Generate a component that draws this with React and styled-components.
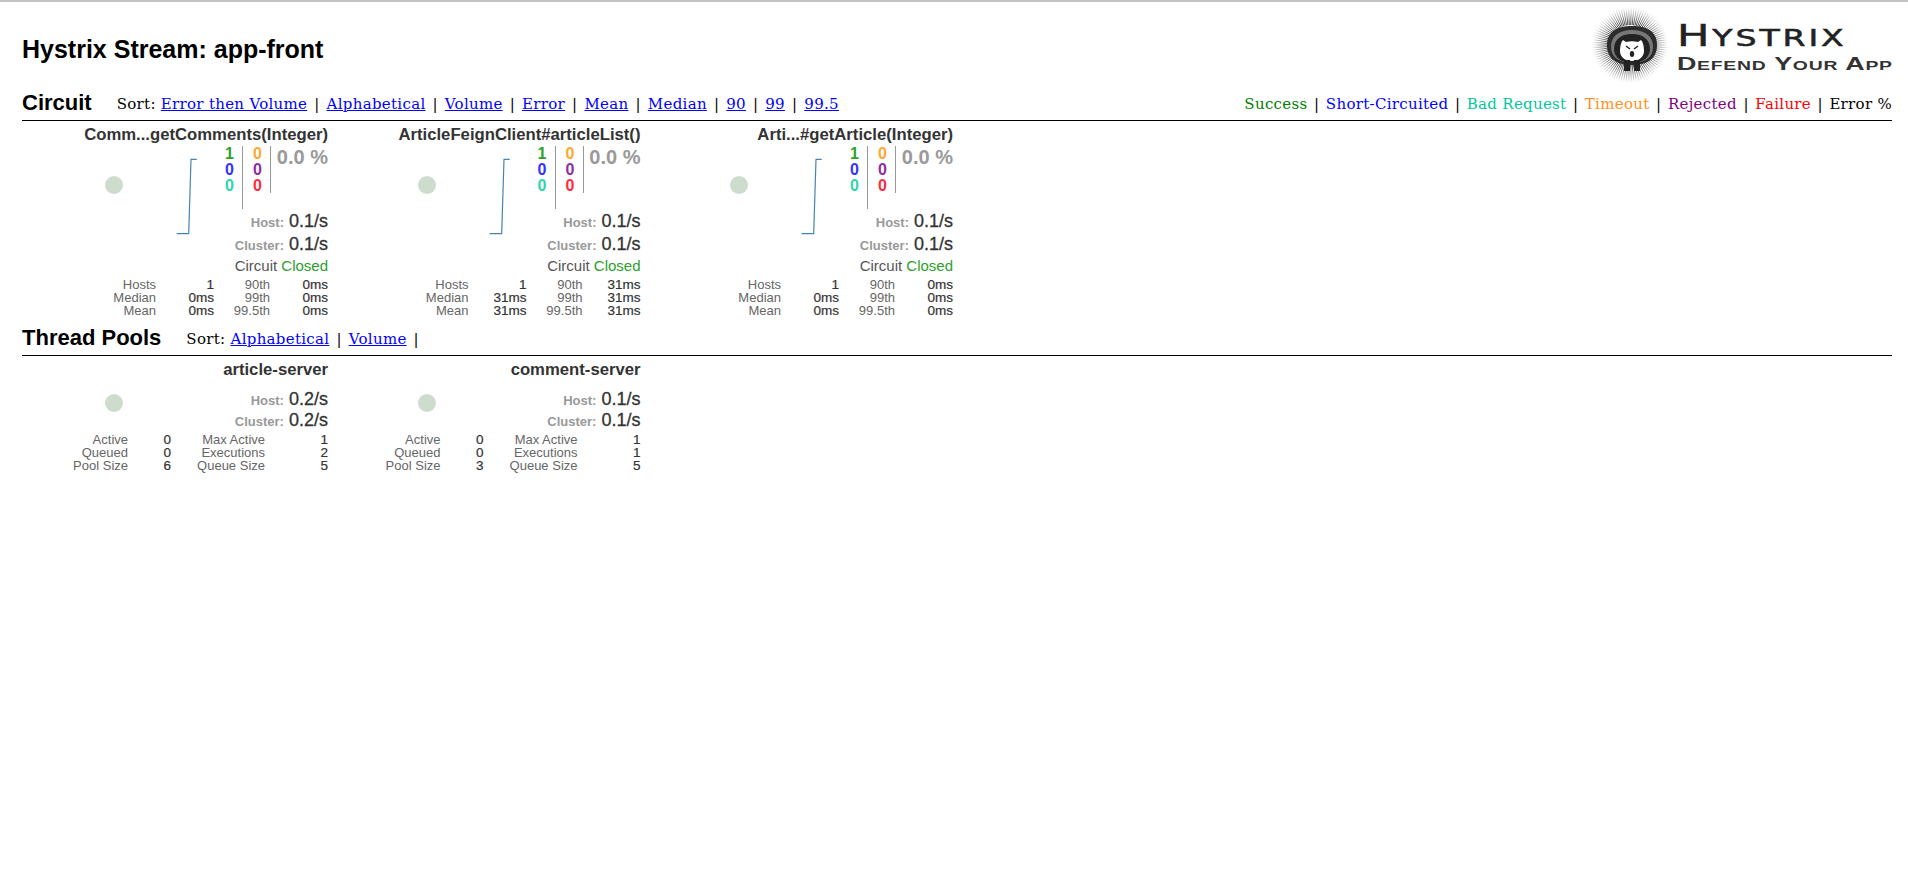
import React from 'react';
import styled, { createGlobalStyle } from 'styled-components';

const GlobalStyle = createGlobalStyle`
  html, body {
    margin: 0;
    padding: 0;
    background: #fff;
    font-family: "Liberation Sans", Arial, sans-serif;
  }
`;

const Page = styled.div`
  border-top: 2px solid #c4c4c4;
  padding: 0 16px 0 22px;
`;

const Header = styled.header`
  display: flex;
  justify-content: space-between;
  align-items: flex-start;
  height: 88px;
`;

const Title = styled.h2`
  margin: 33px 0 0;
  font-size: 25px;
  line-height: 28px;
  font-weight: bold;
  color: #000;
`;

const Logo = styled.div`
  display: flex;
  align-items: flex-start;
  gap: 8px;
  margin: 5px 4px 0 0;
`;

const LogoText = styled.div`
  width: 211px;
  margin-top: 13px;
  display: flex;
  flex-direction: column;
  color: #222;
  white-space: nowrap;
`;

const LogoName = styled.div`
  font-family: "DejaVu Sans", sans-serif;
  font-size: 30px;
  line-height: 32px;
  letter-spacing: 2px;
  -webkit-text-stroke: 0.5px #222;
  transform: scaleX(1.44);
  transform-origin: left center;
`;

const LogoNameRest = styled.span`
  font-size: 23px;
`;

const LogoTag = styled.div`
  font-family: "Liberation Sans", sans-serif;
  font-size: 18px;
  line-height: 21px;
  font-weight: bold;
  font-variant: small-caps;
  letter-spacing: 0.5px;
  color: #333;
  transform: scaleX(1.49);
  transform-origin: left center;
`;

const SectionBar = styled.div`
  display: flex;
  justify-content: space-between;
  align-items: center;
  box-sizing: border-box;
  height: 31px;
  padding-bottom: 5px;
  border-bottom: 1px solid #000;
`;

const SectionLeft = styled.div`
  display: flex;
  align-items: center;
`;

const SectionName = styled.h3`
  margin: 0 ${({ $gap }) => $gap}px 0 0;
  font-size: 22px;
  line-height: 26px;
  font-weight: bold;
  color: #000;
`;

const Menu = styled.div`
  padding-top: 3px;
  font-family: "DejaVu Serif", serif;
  font-size: 15px;
  letter-spacing: 0.3px;
  color: #000;
  white-space: nowrap;
`;

const MenuLink = styled.a`
  color: #0000ff;
  text-decoration: underline;
`;

const Separator = styled.span`
  padding: 0 ${({ $pad }) => $pad}px;
`;

const Legend = styled.span`
  color: ${({ $color }) => $color};
`;

const Cards = styled.div`
  display: flex;
  padding: 4px 0 8px;
`;

const Card = styled.div`
  width: 306px;
  margin-right: 6.5px;
`;

const CardTitle = styled.div`
  text-align: right;
  font-size: 16.7px;
  line-height: 20px;
  font-weight: bold;
  color: #333;
  white-space: nowrap;
`;

const CardBody = styled.div`
  display: flex;
  height: ${({ $height }) => $height}px;
`;

const ChartArea = styled.div`
  position: relative;
  flex: 1;
`;

const Bubble = styled.span`
  position: absolute;
  left: 83px;
  top: ${({ $y }) => $y}px;
  width: 18px;
  height: 18px;
  border-radius: 50%;
  background: #cddccd;
`;

const Spark = styled.svg`
  position: absolute;
  left: 0;
  top: 0;
`;

const Side = styled.div`
  display: flex;
  flex-direction: column;
  align-items: flex-end;
  padding-top: ${({ $top }) => $top}px;
`;

const CounterRow = styled.div`
  display: flex;
  height: 64px;
  margin-top: 1px;
`;

const CounterColumn = styled.div`
  width: 28px;
  height: ${({ $height }) => $height}px;
  padding-right: 8px;
  box-sizing: border-box;
  border-right: 1px solid #999;
  text-align: right;
`;

const Count = styled.div`
  font-size: 16px;
  line-height: 16px;
  font-weight: bold;
  color: ${({ $color }) => $color};
`;

const ErrorRate = styled.div`
  width: 57px;
  text-align: right;
  font-size: 20px;
  line-height: 22px;
  font-weight: bold;
  color: #999;
`;

const RateLine = styled.div`
  height: ${({ $height }) => $height}px;
  line-height: ${({ $height }) => $height}px;
  font-size: 18px;
  color: #333;
  -webkit-text-stroke: 0.3px #333;
  white-space: nowrap;
`;

const RateLabel = styled.span`
  font-size: 13px;
  font-weight: bold;
  color: #999;
  -webkit-text-stroke: 0;
`;

const CircuitLine = styled.div`
  height: 20px;
  line-height: 20px;
  font-size: 15px;
  color: #555;
`;

const Closed = styled.span`
  color: #2ca02c;
`;

const Stats = styled.div`
  display: grid;
  grid-template-columns: ${({ $columns }) => $columns};
  justify-content: end;
  font-size: 13px;
  line-height: 13px;
  text-align: right;
  color: #666;
  margin-top: 2px;
`;

const StatValue = styled.div`
  font-size: 13.5px;
  color: #333;
  -webkit-text-stroke: 0.2px #333;
`;

const circuits = [
  {
    name: 'Comm...getComments(Integer)',
    stats: [['Hosts', '1', '90th', '0ms'], ['Median', '0ms', '99th', '0ms'], ['Mean', '0ms', '99.5th', '0ms']],
  },
  {
    name: 'ArticleFeignClient#articleList()',
    stats: [['Hosts', '1', '90th', '31ms'], ['Median', '31ms', '99th', '31ms'], ['Mean', '31ms', '99.5th', '31ms']],
  },
  {
    name: 'Arti...#getArticle(Integer)',
    stats: [['Hosts', '1', '90th', '0ms'], ['Median', '0ms', '99th', '0ms'], ['Mean', '0ms', '99.5th', '0ms']],
  },
];

const pools = [
  {
    name: 'article-server',
    rate: '0.2/s',
    stats: [['Active', '0', 'Max Active', '1'], ['Queued', '0', 'Executions', '2'], ['Pool Size', '6', 'Queue Size', '5']],
  },
  {
    name: 'comment-server',
    rate: '0.1/s',
    stats: [['Active', '0', 'Max Active', '1'], ['Queued', '0', 'Executions', '1'], ['Pool Size', '3', 'Queue Size', '5']],
  },
];

const circuitSorts = ['Error then Volume', 'Alphabetical', 'Volume', 'Error', 'Mean', 'Median', '90', '99', '99.5'];
const poolSorts = ['Alphabetical', 'Volume'];

const legend = [
  ['Success', '#008000'],
  ['Short-Circuited', '#0000ff'],
  ['Bad Request', '#00c8a0'],
  ['Timeout', '#ff9020'],
  ['Rejected', '#800080'],
  ['Failure', '#ff0000'],
  ['Error %', '#000'],
];

const spikes = Array.from({ length: 90 }, (_, i) => (i * Math.PI * 2) / 90);

const Hedgehog = () => (
  <svg width="78" height="76" viewBox="0 0 78 76">
    <defs>
      <radialGradient id="halo" gradientUnits="userSpaceOnUse" cx="39" cy="38" r="38">
        <stop offset="0.55" stopColor="#222" />
        <stop offset="1" stopColor="#fff" />
      </radialGradient>
    </defs>
    {spikes.map((a) => (
      <line
        key={a}
        x1={39 + Math.cos(a) * 20}
        y1={38 + Math.sin(a) * 20}
        x2={39 + Math.cos(a) * 38}
        y2={38 + Math.sin(a) * 38}
        stroke="url(#halo)"
        strokeOpacity="0.85"
      />
    ))}
    <path d="M16 38 C16 24 27 19 41 19 C55 19 66 24 66 38 C66 52 56 58 41 58 C26 58 16 52 16 38 Z" fill="#2c2c2c" />
    <path d="M20 40 C20 28 30 23 41 23 C52 23 62 28 62 40 C62 50 54 56 41 56 C28 56 20 50 20 40 Z" fill="#777" />
    <path d="M23 42 C23 31 32 27 41 27 C50 27 59 31 59 42 C59 50 52 56 41 56 C30 56 23 50 23 42 Z" fill="#222" />
    <path d="M29 44 C29 39 30 35 32 33 L35 35 C39 34 43 34 47 35 L50 33 C52 35 53 39 53 44 C53 50 48 54 41 54 C34 54 29 50 29 44 Z" fill="#fff" />
    <path d="M35 39 L39 42 M47 39 L43 42" stroke="#222" strokeWidth="1.5" />
    <ellipse cx="41" cy="47" rx="2.2" ry="3" fill="#222" />
    <rect x="33" y="53" width="6" height="11" fill="#222" />
    <rect x="43" y="53" width="6" height="11" fill="#222" />
  </svg>
);

const Sparkline = () => (
  <Spark width="240" height="110">
    <polyline points="154.7,88.7 166.7,88.7 169,14.3 174.7,14.3" fill="none" stroke="#4682b4" strokeWidth="1.2" />
  </Spark>
);

const SortMenu = ({ items, trailing }) => (
  <Menu>
    Sort:{' '}
    {items.map((item, i) => (
      <React.Fragment key={item}>
        <MenuLink href="#">{item}</MenuLink>
        {i < items.length - 1 || trailing ? <Separator $pad={7}>|</Separator> : null}
      </React.Fragment>
    ))}
  </Menu>
);

const StatsTable = ({ rows, columns }) => (
  <Stats $columns={columns}>
    {rows.map((row) => (
      <React.Fragment key={row[0]}>
        <div>{row[0]}</div>
        <StatValue>{row[1]}</StatValue>
        <div>{row[2]}</div>
        <StatValue>{row[3]}</StatValue>
      </React.Fragment>
    ))}
  </Stats>
);

const CircuitCard = ({ item }) => (
  <Card>
    <CardTitle>{item.name}</CardTitle>
    <CardBody $height={131}>
      <ChartArea>
        <Bubble $y={31} />
        <Sparkline />
      </ChartArea>
      <Side $top={0}>
        <CounterRow>
          <CounterColumn $height={63}>
            <Count $color="#2ca02c">1</Count>
            <Count $color="#3333ff">0</Count>
            <Count $color="#2ed6ac">0</Count>
          </CounterColumn>
          <CounterColumn $height={47}>
            <Count $color="#ffa82c">0</Count>
            <Count $color="#8e2d9e">0</Count>
            <Count $color="#ff2a3c">0</Count>
          </CounterColumn>
          <ErrorRate>0.0 %</ErrorRate>
        </CounterRow>
        <RateLine $height={23}>
          <RateLabel>Host:</RateLabel> 0.1/s
        </RateLine>
        <RateLine $height={23}>
          <RateLabel>Cluster:</RateLabel> 0.1/s
        </RateLine>
        <CircuitLine>
          Circuit <Closed>Closed</Closed>
        </CircuitLine>
      </Side>
    </CardBody>
    <StatsTable rows={item.stats} columns="70px 58px 56px 58px" />
  </Card>
);

const PoolCard = ({ item }) => (
  <Card>
    <CardTitle>{item.name}</CardTitle>
    <CardBody $height={51}>
      <ChartArea>
        <Bubble $y={14} />
      </ChartArea>
      <Side $top={9}>
        <RateLine $height={21}>
          <RateLabel>Host:</RateLabel> {item.rate}
        </RateLine>
        <RateLine $height={21}>
          <RateLabel>Cluster:</RateLabel> {item.rate}
        </RateLine>
      </Side>
    </CardBody>
    <StatsTable rows={item.stats} columns="106px 43px 94px 63px" />
  </Card>
);

export default function App() {
  return (
    <Page>
      <GlobalStyle />
      <Header>
        <Title>Hystrix Stream: app-front</Title>
        <Logo>
          <Hedgehog />
          <LogoText>
            <LogoName>H<LogoNameRest>YSTRIX</LogoNameRest></LogoName>
            <LogoTag>Defend Your App</LogoTag>
          </LogoText>
        </Logo>
      </Header>
      <SectionBar>
        <SectionLeft>
          <SectionName $gap={25}>Circuit</SectionName>
          <SortMenu items={circuitSorts} />
        </SectionLeft>
        <Menu>
          {legend.map(([label, color], i) => (
            <React.Fragment key={label}>
              <Legend $color={color}>{label}</Legend>
              {i < legend.length - 1 ? <Separator $pad={6.5}>|</Separator> : null}
            </React.Fragment>
          ))}
        </Menu>
      </SectionBar>
      <Cards>
        {circuits.map((item) => (
          <CircuitCard key={item.name} item={item} />
        ))}
      </Cards>
      <SectionBar>
        <SectionLeft>
          <SectionName $gap={25}>Thread Pools</SectionName>
          <SortMenu items={poolSorts} trailing />
        </SectionLeft>
      </SectionBar>
      <Cards>
        {pools.map((item) => (
          <PoolCard key={item.name} item={item} />
        ))}
      </Cards>
    </Page>
  );
}
